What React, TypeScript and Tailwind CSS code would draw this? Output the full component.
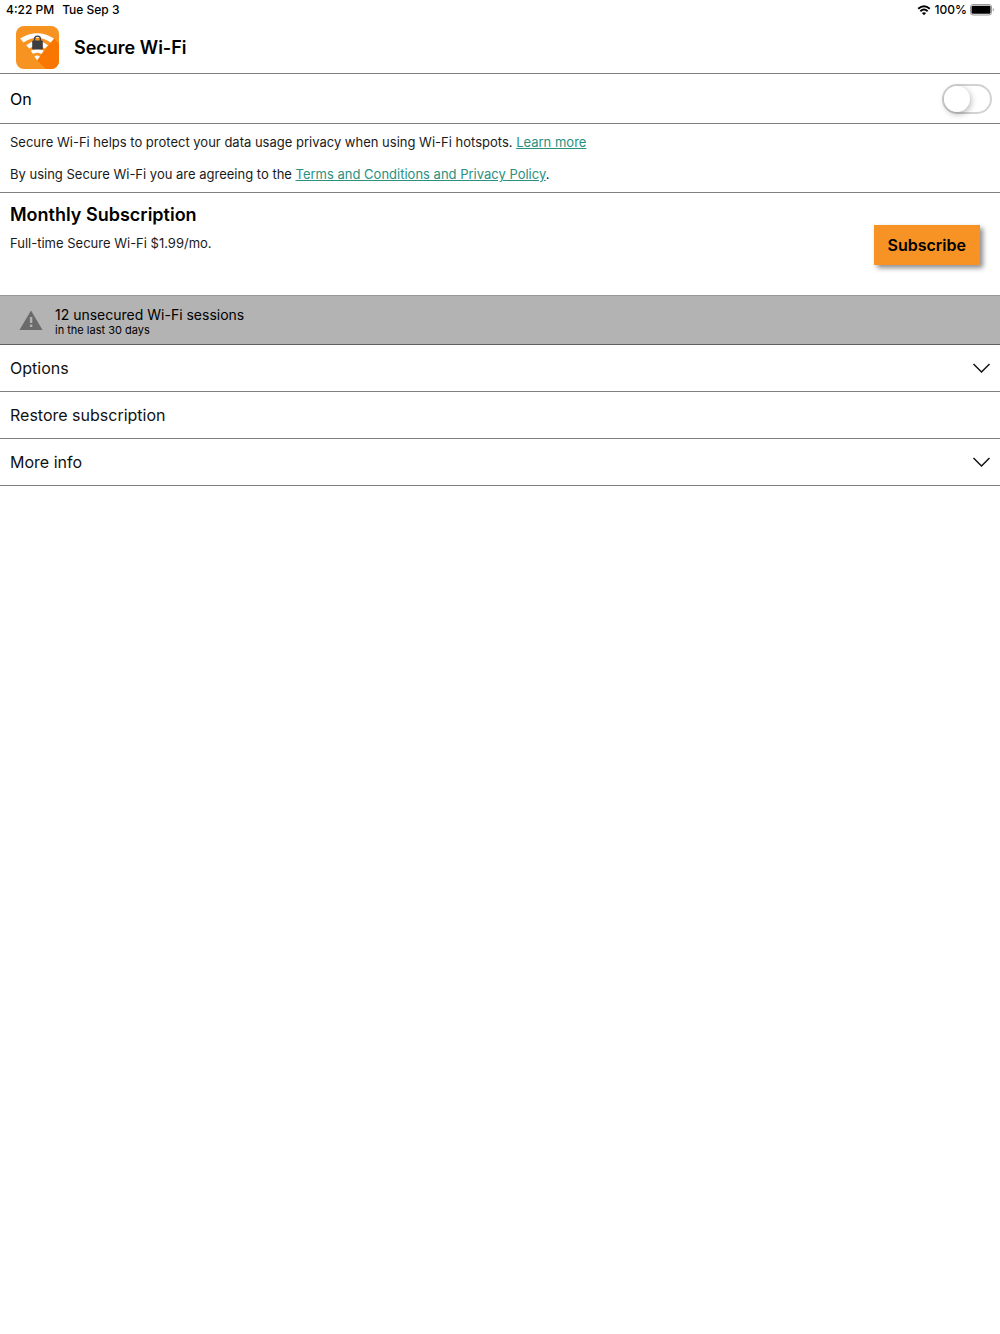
import React, { useState } from 'react';

const AppLogo = () => (
  <svg className="h-11 w-11 shrink-0" viewBox="0 0 44 44" aria-hidden="true">
    <defs>
      <clipPath id="logo-shape">
        <rect x="1" y="1" width="43" height="43" rx="8" />
      </clipPath>
    </defs>
    <g clipPath="url(#logo-shape)">
      <rect width="44" height="44" fill="#f79321" />
      <path d="M39 13.5L44 18.5V44H31L22 35Z" fill="#f97700" />
    </g>
    <path d="M5.2 13.5Q22 2.8 39 13.5L35.8 17.5Q22 7.8 8.5 17.5Z" fill="#fff" />
    <path d="M11.2 20.3Q22 11.5 33 20.3L30 23.6Q22 17.5 14.4 23.6Z" fill="#fff" />
    <path d="M15.8 25.8Q22 22.4 28.8 25.8L26.4 29Q22 26.6 18 29Z" fill="#fff" />
    <path d="M19.3 31.4Q22 29.4 25 31.4L22.1 35.2Z" fill="#fff" />
    <rect x="17.2" y="15.6" width="10.6" height="9" rx="0.8" fill="#3d3d40" />
    <path d="M19.6 16V14a2.9 2.9 0 0 1 5.8 0V16" fill="none" stroke="#3d3d40" strokeWidth="1.4" />
  </svg>
);

const WifiIcon = () => (
  <svg className="h-3 w-4" viewBox="0 0 16 12" fill="none" stroke="#000" strokeWidth="1.9" aria-hidden="true">
    <path d="M2.2 4.7Q8 -0.4 13.8 4.7" />
    <path d="M4.4 7.2Q8 4 11.6 7.2" />
    <path d="M5.9 9.1Q8 7.5 10.1 9.1L8 11.2Z" fill="#000" stroke="none" />
  </svg>
);

const BatteryIcon = () => (
  <svg className="h-3 w-6" viewBox="0 0 24 12" aria-hidden="true">
    <rect x="0.5" y="0.5" width="21" height="10.5" rx="2.5" fill="#fff" stroke="#999" />
    <rect x="1.5" y="1.8" width="19" height="8" rx="1.3" fill="#000" />
    <path d="M22.8 4V7.6Q24 7 24 5.8T22.8 4Z" fill="#999" />
  </svg>
);

const WarningIcon = () => (
  <svg className="h-5 w-6 shrink-0" viewBox="0 0 24 20" aria-hidden="true">
    <path d="M12 0.5L23.5 20H0.5Z" fill="#6b6b6b" />
    <rect x="10.9" y="7" width="2.4" height="6" fill="#b3b3b3" />
    <rect x="10.9" y="14.6" width="2.4" height="2.4" fill="#b3b3b3" />
  </svg>
);

const Chevron = () => (
  <svg className="h-3 w-5" viewBox="0 0 20 12" fill="none" stroke="#111" strokeWidth="1.5" aria-hidden="true">
    <path d="M3.5 2L11.5 10L19.5 2" />
  </svg>
);

const rows = [
  { label: 'Options', expandable: true },
  { label: 'Restore subscription', expandable: false },
  { label: 'More info', expandable: true },
];

function App() {
  const [enabled, setEnabled] = useState(false);

  return (
    <div className="min-h-screen bg-white font-['Inter',sans-serif] text-black">
      {/* Status bar */}
      <div className="flex h-5 items-center justify-between px-1.5 text-xs font-medium">
        <div className="flex gap-2">
          <span>4:22 PM</span>
          <span>Tue Sep 3</span>
        </div>
        <div className="flex items-center gap-[3px]">
          <WifiIcon />
          <span>100%</span>
          <BatteryIcon />
        </div>
      </div>

      <header className="flex h-[54px] items-center gap-[15px] border-b border-[#808080] px-[15px]">
        <AppLogo />
        <h1 className="pt-0.5 text-lg font-semibold">Secure Wi-Fi</h1>
      </header>

      <main>
        <div className="flex h-[50px] items-center justify-between border-b border-[#808080] pr-2 pl-2.5">
          <label htmlFor="secure-wifi" className="text-base">On</label>
          <div className="relative h-[30px] w-[50px]">
            <input
              id="secure-wifi"
              type="checkbox"
              role="switch"
              checked={enabled}
              onChange={() => setEnabled(!enabled)}
              className="peer h-full w-full appearance-none rounded-full border-2 border-[#d2d2d2] bg-white checked:border-[#f79321] checked:bg-[#f79321]"
            />
            <span className="pointer-events-none absolute top-0.5 left-0.5 h-[26px] w-[26px] rounded-full bg-white shadow-[1px_2px_6px_rgba(0,0,0,0.3)] peer-checked:left-[22px]" />
          </div>
        </div>

        <div className="space-y-3 border-b border-[#808080] px-2.5 py-2 text-[13px] leading-5 text-[#1a1a1a]">
          <p>
            Secure Wi-Fi helps to protect your data usage privacy when using Wi-Fi hotspots.{' '}
            <a href="#learn-more" className="text-[#2b9080] underline">Learn more</a>
          </p>
          <p>
            By using Secure Wi-Fi you are agreeing to the{' '}
            <a href="#terms" className="text-[#2b9080] underline">Terms and Conditions and Privacy Policy</a>.
          </p>
        </div>

        <section className="flex items-start justify-between pt-2 pr-5 pb-6 pl-2.5">
          <div className="h-[70px]">
            <h2 className="text-lg leading-7 font-semibold">Monthly Subscription</h2>
            <p className="mt-1 text-[13px] leading-5 text-[#1a1a1a]">Full-time Secure Wi-Fi $1.99/mo.</p>
          </div>
          <button className="mt-6 h-10 bg-[#f79324] px-3.5 text-base font-semibold shadow-[3px_3px_5px_rgba(0,0,0,0.45)]">
            Subscribe
          </button>
        </section>

        <div className="flex h-[50px] items-center gap-3 border-t border-b border-t-[#999] border-b-[#606060] bg-[#b3b3b3] px-[19px]">
          <WarningIcon />
          <div className="pt-1">
            <p className="text-sm leading-4">12 unsecured Wi-Fi sessions</p>
            <p className="text-[11px] leading-[14px]">in the last 30 days</p>
          </div>
        </div>

        {rows.map((row) => (
          <button
            key={row.label}
            className="flex h-[47px] w-full items-center justify-between border-b border-[#808080] px-2.5 text-base text-[#111]"
          >
            <span>{row.label}</span>
            {row.expandable && <Chevron />}
          </button>
        ))}
      </main>
    </div>
  );
}

export default App;
